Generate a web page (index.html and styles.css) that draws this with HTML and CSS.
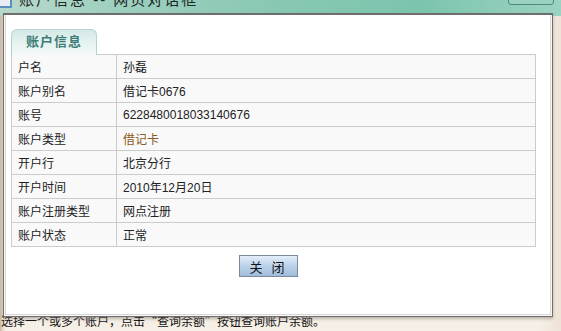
FILE: index.html
```html
<!DOCTYPE html>
<html lang="zh-CN">

<head>
    <meta charset="UTF-8">
    <title>账户信息</title>
    <link rel="stylesheet" href="styles.css">
</head>

<body>
    <div class="desktop">
        <div class="titlebar">
            <span class="app-icon"></span>
            <span class="title-text">账户信息 -- 网页对话框</span>
            <span class="title-btn"></span>
        </div>
        <p class="page-tip">选择一个或多个账户，点击“查询余额”按钮查询账户余额。</p>

        <div class="dialog">
            <div class="dialog-body">
                <div class="tabs">
                    <span class="tab">账户信息</span>
                </div>
                <table class="info">
                    <tr>
                        <th>户名</th>
                        <td>孙磊</td>
                    </tr>
                    <tr>
                        <th>账户别名</th>
                        <td>借记卡0676</td>
                    </tr>
                    <tr>
                        <th>账号</th>
                        <td>6228480018033140676</td>
                    </tr>
                    <tr>
                        <th>账户类型</th>
                        <td class="brown">借记卡</td>
                    </tr>
                    <tr>
                        <th>开户行</th>
                        <td>北京分行</td>
                    </tr>
                    <tr>
                        <th>开户时间</th>
                        <td>2010年12月20日</td>
                    </tr>
                    <tr>
                        <th>账户注册类型</th>
                        <td>网点注册</td>
                    </tr>
                    <tr>
                        <th>账户状态</th>
                        <td>正常</td>
                    </tr>
                </table>
                <div class="actions">
                    <button class="btn">关 闭</button>
                </div>
            </div>
        </div>
    </div>
</body>

</html>
```
FILE: styles.css
```css
html,
body {
    margin: 0;
    padding: 0;
}

body {
    width: 561px;
    height: 331px;
    overflow: hidden;
    font-family: "Liberation Sans", "Noto Sans CJK SC", sans-serif;
    font-size: 12px;
    color: #222;
}

.desktop {
    position: relative;
    width: 561px;
    height: 331px;
    background: linear-gradient(to right, #c9b79f 0, #e9ddd0 3px, #f6efe6 6px, #f6efe6 540px, #efe2d6 100%);
}

.titlebar {
    height: 16px;
    position: relative;
    background: linear-gradient(to right, #b9d9cc 0, #9fd0bf 20%, #88c8b2 50%, #7cc4ae 75%, #9bd3c2 100%);
}

.app-icon {
    position: absolute;
    left: 0;
    top: -6px;
    width: 10px;
    height: 12px;
    background: #e8eef2;
    border-right: 2px solid #5a8fc0;
    border-bottom: 2px solid #5a8fc0;
}

.title-text {
    position: absolute;
    left: 19px;
    top: -12px;
    font-size: 15px;
    color: #1c2a28;
    letter-spacing: 2px;
}

.title-btn {
    position: absolute;
    left: 508px;
    top: -8px;
    width: 44px;
    height: 11px;
    border: 1px solid #4f8a7c;
    border-radius: 3px;
    background: #9ad2c2;
}

.page-tip {
    position: absolute;
    left: 1px;
    top: 312px;
    margin: 0;
    font-family: "Noto Sans CJK SC", sans-serif;
    font-size: 12px;
    color: #111;
    white-space: nowrap;
}

.dialog {
    position: absolute;
    left: 3px;
    top: 13px;
    width: 546px;
    height: 300px;
    border: 1px solid #6e6e6e;
    border-top-width: 2px;
    background: #f8f8f8;
    box-shadow: 0 2px 3px rgba(120, 110, 100, 0.45);
    padding: 0 1px 1px 1px;
}

.dialog-body {
    height: 100%;
    background: #fff;
    border: 1px solid #d8d8d8;
    border-top: 0;
    box-sizing: border-box;
    padding: 14px 0 0 5px;
}

.tabs {
    height: 25px;
}

.tab {
    display: inline-block;
    box-sizing: border-box;
    width: 86px;
    height: 26px;
    line-height: 24px;
    text-align: center;
    font-size: 13px;
    font-weight: bold;
    letter-spacing: 1px;
    color: #3f7c78;
    border: 1px solid #b7d3d1;
    border-bottom: 0;
    border-radius: 6px 6px 0 0;
    background: linear-gradient(to bottom, #d3e9e7 0, #e6f3f1 55%, #f3f9f8 100%);
}

.info {
    width: 525px;
    border-collapse: collapse;
    background: #f9f9f9;
}

.info th,
.info td {
    height: 23px;
    padding: 0 6px;
    border: 1px solid #cccccc;
    font-weight: normal;
    text-align: left;
    color: #222;
}

.info th {
    width: 92px;
}

.info td.brown {
    color: #8a5a22;
}

.actions {
    display: flex;
    justify-content: center;
    padding-top: 8px;
    padding-right: 24px;
}

.btn {
    width: 59px;
    height: 22px;
    padding: 0;
    font-family: "Noto Sans CJK SC", sans-serif;
    font-size: 13px;
    letter-spacing: 3px;
    color: #111;
    border: 1px solid #7a8a99;
    background: linear-gradient(to bottom, #e3eef9 0, #bcd2ea 50%, #9fbcdd 100%);
}
```
